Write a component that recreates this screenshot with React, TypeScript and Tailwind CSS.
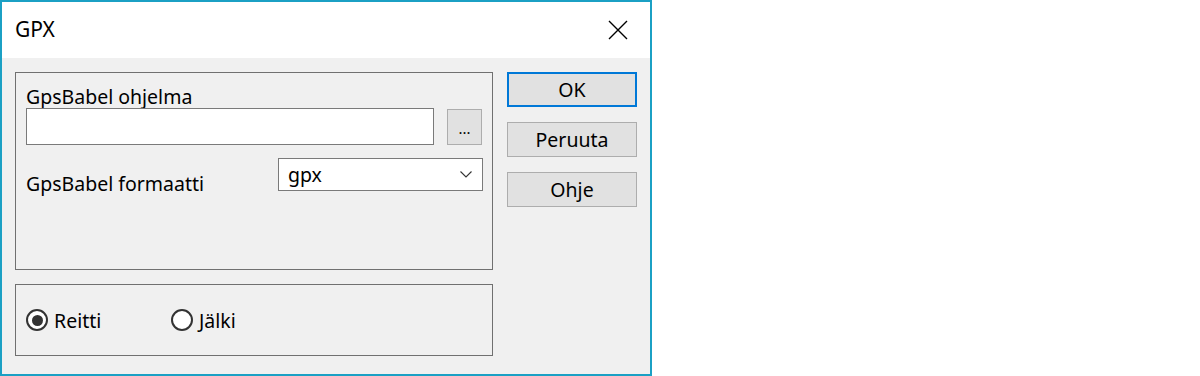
import { useState } from "react"

const font = { fontFamily: '"Noto Sans", "Open Sans", sans-serif' }

function Radio({ label, checked, onClick }: { label: string; checked: boolean; onClick: () => void }) {
	return (
		<button onClick={onClick} className="flex w-[145px] items-center gap-[6px] text-[19.5px] leading-[23px] text-black">
			<span className="flex h-[22px] w-[22px] items-center justify-center rounded-full border-2 border-[#333333] bg-white">
				{checked && <span className="h-[11px] w-[11px] rounded-full bg-[#333333]" />}
			</span>
			{label}
		</button>
	)
}

export default function App() {
	const [mode, setMode] = useState<"reitti" | "jalki">("reitti")

	return (
		<div className="h-[376px] w-[1200px] bg-white" style={font}>
			<div className="flex h-[376px] w-[652px] flex-col border-2 border-[#1ba0c4]">
				{/* Title bar */}
				<div className="flex h-[56px] items-center justify-between bg-white pl-[13px] pr-[22px]">
					<span className="text-[21px] text-black">GPX</span>
					<svg width="20" height="20" viewBox="0 0 20 20" className="text-black">
						<path d="M1 1 L19 19 M19 1 L1 19" stroke="currentColor" strokeWidth="1.4" fill="none" />
					</svg>
				</div>

				<div className="flex flex-1 bg-[#f0f0f0] pl-[13px] pt-[14px]">
					<div className="flex w-[478px] flex-col gap-[14px]">
						<div className="h-[198px] border border-[#707070] px-[10px] pt-[12px]">
							<div className="text-[19.5px] leading-[23px] text-black">GpsBabel ohjelma</div>
							<div className="flex items-center gap-[13px]">
								<input className="h-[37px] w-[408px] border border-[#7a7a7a] bg-white px-2 text-[19.5px] outline-none" />
								<button className="flex h-[36px] w-[35px] items-end justify-center border border-[#adadad] bg-[#e1e1e1] pb-[8px] text-[15px] leading-none text-black">
									...
								</button>
							</div>
							<div className="mt-[13px] flex items-start justify-between">
								<span className="mt-[14px] text-[19.5px] leading-[23px] text-black">GpsBabel formaatti</span>
								<div className="mr-[-1px] flex h-[33px] w-[205px] items-center justify-between border border-[#7a7a7a] bg-white pl-[9px] pr-[10px]">
									<span className="text-[19.5px] leading-[23px] text-black">gpx</span>
									<svg width="12" height="7" viewBox="0 0 12 7">
										<path d="M0.5 0.5 L6 6 L11.5 0.5" stroke="#333" strokeWidth="1.1" fill="none" />
									</svg>
								</div>
							</div>
						</div>
						<div className="flex h-[72px] items-center border border-[#707070] pl-[10px]">
							<Radio label="Reitti" checked={mode === "reitti"} onClick={() => setMode("reitti")} />
							<Radio label="Jälki" checked={mode === "jalki"} onClick={() => setMode("jalki")} />
						</div>
					</div>

					<div className="ml-[14px] flex w-[130px] flex-col gap-[15px]">
						<button className="h-[35px] border-2 border-[#0078d7] bg-[#e1e1e1] text-[19.5px] text-black">OK</button>
						<button className="h-[35px] border border-[#adadad] bg-[#e1e1e1] text-[19.5px] text-black">Peruuta</button>
						<button className="h-[35px] border border-[#adadad] bg-[#e1e1e1] text-[19.5px] text-black">Ohje</button>
					</div>
				</div>
			</div>
		</div>
	)
}
